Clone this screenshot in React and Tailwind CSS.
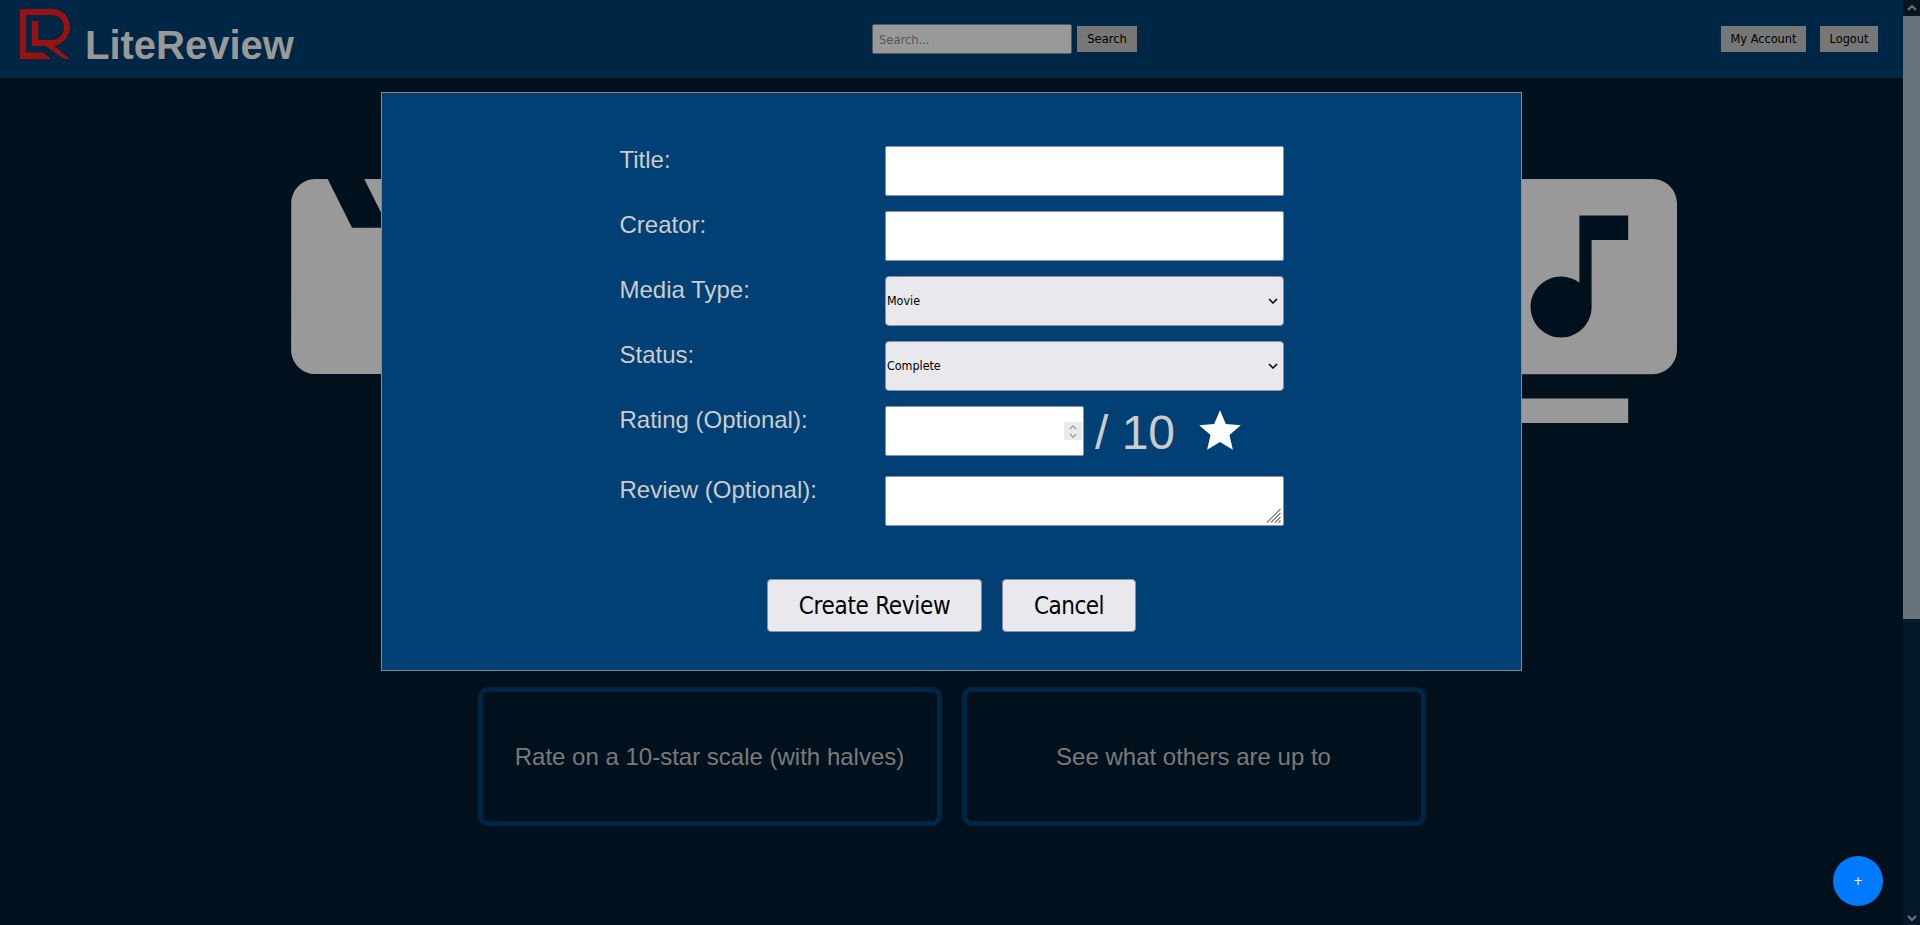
import React from "react";

const uiFont = "font-['DejaVu_Sans_Condensed','DejaVu_Sans',sans-serif] [font-stretch:condensed]";

function Logo() {
  return (
    <svg viewBox="0 0 50 50" className="h-[50px] w-[50px] shrink-0" fill="#991111">
      <path d="M0 0H32C42.5 0 50 8.200 50 18.300C50 27 43.500 35 34 36.600L49.500 50H44L25.500 37H12V12H18.300V31H32C39 31 44 25 44 18.300C44 11.500 39 6 32 6H6V43.500H23L31 50H0Z" />
    </svg>
  );
}

function Chevron({ up, className }) {
  return (
    <svg viewBox="0 0 10 6" className={className} fill="none" stroke="currentColor" strokeWidth="1.5">
      <path d={up ? "M1 5L5 1L9 5" : "M1 1L5 5L9 1"} />
    </svg>
  );
}

function Header() {
  return (
    <header className="flex h-[78px] shrink-0 bg-[#002646] pl-5">
      <div className="flex w-[852px] gap-[15px] pt-[9px]">
        <Logo />
        <h1 className="pt-[13px] text-[40px] leading-[46px] font-bold text-[#999999]">LiteReview</h1>
      </div>
      <div className="flex grow items-start gap-[5px] pt-6">
        <input
          placeholder="Search..."
          className={`h-[30px] w-[200px] rounded-[2px] border border-[#56555c] bg-[#999999] px-[6px] text-[12.8px] placeholder:text-[#555555] ${uiFont}`}
        />
        <button className={`mt-[2px] h-[26px] w-[60px] bg-[#777777] text-[12.8px] text-black ${uiFont}`}>Search</button>
      </div>
      <div className="flex gap-[14px] pt-[26px] pr-[25px]">
        <button className={`h-[26px] w-[85px] bg-[#777777] text-[12.6px] text-black ${uiFont}`}>My Account</button>
        <button className={`h-[26px] w-[58px] bg-[#777777] text-[12.6px] text-black ${uiFont}`}>Logout</button>
      </div>
    </header>
  );
}

function Field({ label, children }) {
  return (
    <div className="flex">
      <label className="w-[266px] pl-[0.5px] text-2xl leading-7 text-[#cccccc]">{label}</label>
      {children}
    </div>
  );
}

const inputBox = "h-[50px] w-[399px] rounded-[2px] border border-[#8f8f9d] bg-white";

function Select({ value }) {
  return (
    <div className="relative">
      <select
        defaultValue={value}
        className={`h-[50px] w-[399px] appearance-none rounded-[4px] border border-[#8f8f9d] bg-[#e9e9ed] pl-[1px] text-[12.4px] text-black ${uiFont}`}
      >
        <option>{value}</option>
      </select>
      <Chevron className="absolute top-[22px] right-[6px] h-[6px] w-[10px] text-black" />
    </div>
  );
}

function Modal() {
  return (
    <div className="absolute top-[92px] left-[381px] flex h-[579px] w-[1141px] flex-col items-center border border-[#888888] bg-[#004075] pt-[53px]">
      <form className="flex flex-col gap-[15px]">
        <Field label="Title:"><input className={inputBox} /></Field>
        <Field label="Creator:"><input className={inputBox} /></Field>
        <Field label="Media Type:"><Select value="Movie" /></Field>
        <Field label="Status:"><Select value="Complete" /></Field>
        <Field label="Rating (Optional):">
          <div className="flex h-[55px] items-start">
            <div className="flex h-[50px] w-[199px] items-center justify-end rounded-[2px] border border-[#8f8f9d] bg-white pr-[1px]">
              <div className="flex h-[18px] w-[18px] flex-col items-center justify-center gap-[3px] bg-[#e9e9ed] text-[#8f8f9d]">
                <Chevron up className="h-[5px] w-[8px]" />
                <Chevron className="h-[5px] w-[8px]" />
              </div>
            </div>
            <span className="ml-[11px] w-[100px] text-[48px] leading-[54px] whitespace-nowrap text-[#cccccc]">/ 10</span>
            <svg viewBox="0 0 24 24" className="h-[50px] w-[50px]" fill="white">
              <path d="M12 17.270 18.180 21l-1.640-7.030L22 9.240l-7.190-.61L12 2 9.190 8.630 2 9.240l5.460 4.730L5.820 21z" />
            </svg>
          </div>
        </Field>
        <Field label="Review (Optional):">
          <div className={`${inputBox} flex items-end justify-end p-[2px]`}>
            <svg viewBox="0 0 15 15" className="h-[15px] w-[15px]" fill="none" stroke="#777777" strokeWidth="1.2">
              <path d="M1 14.500L14.500 1M5 14.500L14.500 5M9 14.500L14.500 9M12.500 14.500L14.500 12.500" />
            </svg>
          </div>
        </Field>
      </form>
      <div className="mt-[53px] flex gap-[20px]">
        <button className={`h-[53px] w-[215px] rounded-[4px] border border-[#8f8f9d] bg-[#e9e9ed] text-2xl tracking-[-0.3px] text-black ${uiFont}`}>Create Review</button>
        <button className={`h-[53px] w-[134px] rounded-[4px] border border-[#8f8f9d] bg-[#e9e9ed] text-2xl tracking-[-0.5px] text-black ${uiFont}`}>Cancel</button>
      </div>
    </div>
  );
}

function Card({ children }) {
  return (
    <div className="flex h-[139px] w-[464px] items-center justify-center rounded-[10px] border-[5px] border-[#002646] text-2xl text-[#7a7a7a]">
      {children}
    </div>
  );
}

export default function App() {
  return (
    <div className="relative flex h-[925px] w-[1920px] overflow-hidden bg-[#00111d] font-['Liberation_Sans',Arial,sans-serif]">
      <div className="flex w-[1903px] flex-col">
        <Header />
        <main className="flex grow flex-col">
          <section className="flex h-[609px] items-start justify-between pt-[101px] pr-[226px] pl-[291px]">
            <svg viewBox="2 4 20 16" className="h-[195px] w-[244px]" fill="#999999">
              <path d="m18 4 2 4h-3l-2-4h-2l2 4h-3l-2-4H8l2 4H7L5 4H4c-1.100 0-1.990.9-1.990 2L2 18c0 1.100.9 2 2 2h16c1.100 0 2-.9 2-2V4z" />
            </svg>
            <svg viewBox="2 2 20 20" className="h-[244px] w-[244px]" fill="#999999">
              <path d="M20 2H8c-1.100 0-2 .9-2 2v12c0 1.100.9 2 2 2h12c1.100 0 2-.9 2-2V4c0-1.100-.9-2-2-2zm-2 5h-3v5.500c0 1.380-1.120 2.500-2.500 2.500S10 13.880 10 12.500s1.120-2.500 2.500-2.500c.57 0 1.080.19 1.500.51V5h4v2zM4 6H2v14c0 1.100.9 2 2 2h14v-2H4V6z" />
            </svg>
          </section>
          <section className="flex justify-center gap-[20px]">
            <Card>Rate on a 10-star scale (with halves)</Card>
            <Card>See what others are up to</Card>
          </section>
        </main>
      </div>
      <div className="flex w-[17px] flex-col items-center justify-between bg-[#061928] text-[#68727c]">
        <div className="flex h-4 w-full items-center justify-center bg-[#081622]">
          <svg viewBox="0 0 10 8" className="h-[8px] w-[10px]" fill="none" stroke="currentColor" strokeWidth="2.200"><path d="M1 6L5 2L9 6" /></svg>
        </div>
        <div className="h-[603px] w-full bg-[#68737e]" />
        <div className="flex grow items-end pb-[3px]">
          <svg viewBox="0 0 10 8" className="h-[8px] w-[10px]" fill="none" stroke="currentColor" strokeWidth="2.200"><path d="M1 2L5 6L9 2" /></svg>
        </div>
      </div>
      <Modal />
      <button className={`absolute top-[856px] left-[1833px] h-[50px] w-[50px] rounded-full bg-[#007bff] text-[12.6px] text-white shadow-[0_2px_5px_rgba(0,0,0,0.3)] ${uiFont}`}>+</button>
    </div>
  );
}
